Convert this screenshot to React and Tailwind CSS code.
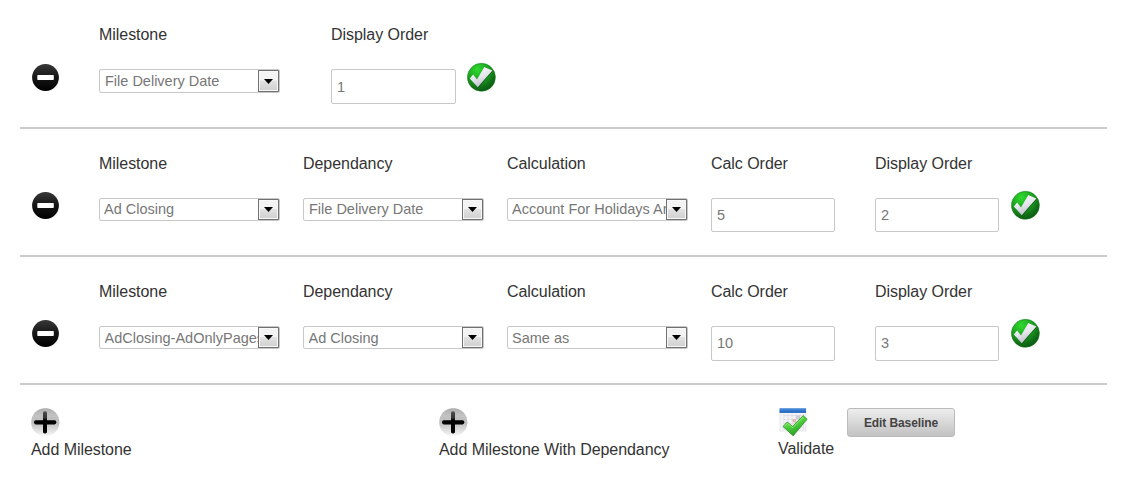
import React from 'react';

const rows = [
  {
    height: 'h-[129px]', labelTop: 'pt-[23px]', iconTop: 'pt-[64px]', checkTop: 'pt-[63px]',
    fields: [
      { label: 'Milestone', value: 'File Delivery Date', select: true, cell: 'w-[232px]', box: 'h-6 pl-[5px] leading-[22px]' },
      { label: 'Display Order', value: '1', cell: 'w-[136px]', box: 'w-[125px] h-[35px] pt-[7px]' },
    ],
  },
  {
    height: 'h-32', labelTop: 'pt-[23px]', iconTop: 'pt-[63px]', checkTop: 'pt-[62px]',
    fields: [
      { label: 'Milestone', value: 'Ad Closing', select: true, cell: 'w-[204px]', box: 'h-[23px] pl-1 leading-5' },
      { label: 'Dependancy', value: 'File Delivery Date', select: true, cell: 'w-[204px]', box: 'h-[23px] pl-[5px] leading-5' },
      { label: 'Calculation', value: 'Account For Holidays And Weekends', select: true, cell: 'w-[204px]', box: 'h-[23px] pl-1 leading-5' },
      { label: 'Calc Order', value: '5', cell: 'w-[164px]', box: 'w-[124px] h-[34px] pt-1.5' },
      { label: 'Display Order', value: '2', cell: 'w-[136px]', box: 'w-[124px] h-[34px] pt-1.5' },
    ],
  },
  {
    height: 'h-32', labelTop: 'pt-[23px]', iconTop: 'pt-[63px]', checkTop: 'pt-[62px]',
    fields: [
      { label: 'Milestone', value: 'AdClosing-AdOnlyPages', select: true, cell: 'w-[204px]', box: 'h-[23px] pl-[4.5px] leading-[22px]' },
      { label: 'Dependancy', value: 'Ad Closing', select: true, cell: 'w-[204px]', box: 'h-[23px] pl-[4.5px] leading-[22px]' },
      { label: 'Calculation', value: 'Same as', select: true, cell: 'w-[204px]', box: 'h-[23px] pl-1 leading-[22px]' },
      { label: 'Calc Order', value: '10', cell: 'w-[164px]', box: 'w-[124px] h-[35px] pt-1.5' },
      { label: 'Display Order', value: '3', cell: 'w-[136px]', box: 'w-[124px] h-[35px] pt-1.5' },
    ],
  },
];

function MinusIcon() {
  return (
    <svg width="27" height="27" viewBox="0 0 27 27" className="block">
      <defs>
        <linearGradient id="minusFill" x1="0" y1="0" x2="0" y2="1">
          <stop offset="0" stopColor="#383838" />
          <stop offset="0.5" stopColor="#161616" />
          <stop offset="1" stopColor="#000" />
        </linearGradient>
      </defs>
      <circle cx="13.5" cy="13.5" r="13.4" fill="url(#minusFill)" />
      <rect x="5.3" y="11" width="16.5" height="5" rx="0.7" fill="#fff" />
    </svg>
  );
}

function CheckIcon() {
  return (
    <svg width="29" height="29" viewBox="0 0 29 29" className="block">
      <defs>
        <radialGradient id="ballFill" cx="0.36" cy="0.22" r="0.8">
          <stop offset="0" stopColor="#2fd92f" />
          <stop offset="0.45" stopColor="#1ea821" />
          <stop offset="0.8" stopColor="#117018" />
          <stop offset="1" stopColor="#0c5a12" />
        </radialGradient>
        <linearGradient id="tickFill" x1="0" y1="0" x2="0.4" y2="1">
          <stop offset="0" stopColor="#fff" />
          <stop offset="0.6" stopColor="#e4e4ec" />
          <stop offset="1" stopColor="#bfbecd" />
        </linearGradient>
      </defs>
      <circle cx="14.4" cy="14.3" r="14" fill="url(#ballFill)" stroke="#167a1b" strokeWidth="0.5" />
      <path d="M4 16 L7 12.6 L10.9 18 L18.2 4.5 L26 8 L11.5 25 Z" fill="#0b4c12" opacity="0.55" />
      <path d="M2.8 15.4 L6.2 11.6 L10 16.6 L17.3 3.9 L25.4 7.5 L16.5 17.5 L10.8 24.3 Z" fill="url(#tickFill)" />
    </svg>
  );
}

function PlusIcon() {
  return (
    <svg width="29" height="29" viewBox="0 0 29 29" className="block">
      <defs>
        <linearGradient id="plusFill" x1="0" y1="0" x2="0" y2="1">
          <stop offset="0" stopColor="#a5a5a5" />
          <stop offset="0.35" stopColor="#c0c0c0" />
          <stop offset="0.5" stopColor="#bcbcbc" />
          <stop offset="1" stopColor="#fafafa" />
        </linearGradient>
        <linearGradient id="plusStem" x1="0" y1="0" x2="0" y2="1">
          <stop offset="0" stopColor="#505050" />
          <stop offset="0.3" stopColor="#333" />
          <stop offset="0.4" stopColor="#000" />
        </linearGradient>
      </defs>
      <circle cx="14.3" cy="14.3" r="14.1" fill="url(#plusFill)" />
      <path d="M1.5 9.5 A14.2 14.2 0 0 1 27.5 9.5 Q15 8 1.5 9.5Z" fill="#fff" opacity="0.12" />
      <rect x="12" y="3.2" width="4" height="22.3" rx="1.8" fill="url(#plusStem)" />
      <rect x="3" y="12.2" width="22.3" height="4.2" rx="1.8" fill="#000" />
    </svg>
  );
}

function CalendarCheckIcon() {
  return (
    <svg width="29" height="29" viewBox="0 0 29 29" className="block">
      <defs>
        <linearGradient id="calTick" x1="0" y1="0" x2="0.5" y2="1">
          <stop offset="0" stopColor="#8df25b" />
          <stop offset="0.5" stopColor="#50d33d" />
          <stop offset="1" stopColor="#289c24" />
        </linearGradient>
        <linearGradient id="calBar" x1="0" y1="0" x2="0" y2="1">
          <stop offset="0" stopColor="#4d91dc" />
          <stop offset="1" stopColor="#1d5fbc" />
        </linearGradient>
      </defs>
      <rect x="1" y="1" width="26" height="22" fill="#f4f4f7" stroke="#dedee3" strokeWidth="0.7" />
      <path d="M4.5 7.5H24M4.5 11.5H24M4.5 15.5H24M4.5 19.5H24M5 6V22M9 6V22M13 6V22M17 6V22M21 6V22M24.5 6V22" stroke="#dcdce3" strokeWidth="0.8" />
      <rect x="13.5" y="11" width="3.5" height="3.5" fill="#dfb9b4" />
      <rect x="17" y="7.5" width="4" height="3.5" fill="#ccccd4" />
      <rect x="0.5" y="0.2" width="26.5" height="4.7" fill="url(#calBar)" />
      <path d="M4 18.5 L8.2 14 L13.6 18.4 L24.2 7.6 L28 11.2 L14.2 27.8 Z" fill="url(#calTick)" stroke="#23891f" strokeWidth="0.8" strokeLinejoin="round" />
      <path d="M5.3 18.3 L8.3 15.2 L13.7 19.7 L24.2 9" fill="none" stroke="#b5f79a" strokeWidth="0.7" />
    </svg>
  );
}

function SelectBox({ value, box }) {
  return (
    <button className={`flex w-[181px] items-stretch overflow-hidden rounded-[2px] border border-[#c8c8c8] bg-white text-left text-[14.5px] text-[#777] ${box}`}>
      <span className="mr-[0.5px] min-w-0 flex-1 overflow-hidden whitespace-nowrap">{value}</span>
      <span className="flex w-[21px] shrink-0 items-center justify-center border border-[#707070] bg-linear-to-b from-[#f3f3f3] from-45% via-[#e2e2e2] via-50% to-[#cfcfcf] shadow-[inset_0_0_0_1px_#f8f8f8]">
        <svg width="9" height="5" viewBox="0 0 9 5" className="block">
          <path d="M0 0H9L4.5 5Z" fill="#000" />
        </svg>
      </span>
    </button>
  );
}

function Field({ label, value, select, cell, box, labelTop }) {
  return (
    <div className={`shrink-0 ${cell} ${labelTop}`}>
      <div className="mb-[22px] h-6 whitespace-nowrap text-base leading-6 tracking-[-0.05px]">{label}</div>
      {select ? (
        <SelectBox value={value} box={box} />
      ) : (
        <div className={`rounded-[2px] border border-[#c8c8c8] pl-[5px] text-[14.5px] leading-5 text-[#777] ${box}`}>{value}</div>
      )}
    </div>
  );
}

export default function App() {
  return (
    <main className="h-[497px] w-[1144px] overflow-hidden bg-white pl-5 font-['Liberation_Sans',Arial,sans-serif] text-[#333]">
      {rows.map((row, i) => (
        <section key={i} className={`flex w-[1087px] items-start border-b-2 border-[#ccc] ${row.height}`}>
          <div className={`w-[79px] shrink-0 pl-3 ${row.iconTop}`}><MinusIcon /></div>
          {row.fields.map((f) => <Field key={f.label} {...f} labelTop={row.labelTop} />)}
          <div className={row.checkTop}><CheckIcon /></div>
        </section>
      ))}
      <footer className="flex items-start pt-[23px] pl-[11px] tracking-[-0.06px]">
        <div className="w-[408px] shrink-0"><PlusIcon /><div className="pt-px leading-6">Add Milestone</div></div>
        <div className="w-[340px] shrink-0"><PlusIcon /><div className="pt-px leading-6">Add Milestone With Dependancy</div></div>
        <div className="w-[68px] shrink-0"><CalendarCheckIcon /><div className="-ml-px leading-6">Validate</div></div>
        <button className="h-[29px] w-[108px] rounded-[3px] border border-[#bbb] bg-linear-to-b from-[#eee] to-[#c2c2c2] text-xs font-bold tracking-[-0.1px] text-[#444]">Edit Baseline</button>
      </footer>
    </main>
  );
}
